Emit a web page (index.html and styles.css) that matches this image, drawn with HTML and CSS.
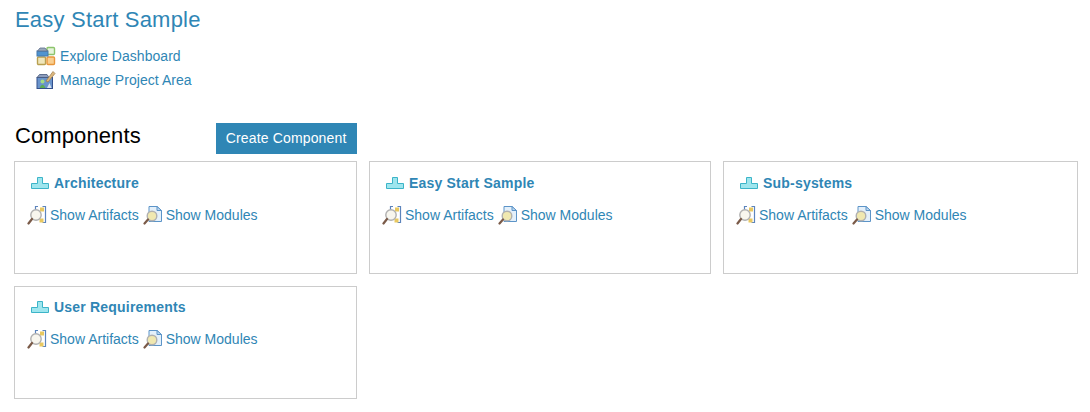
FILE: index.html
```html
<!DOCTYPE html>
<html lang="en">
<head>
    <meta charset="UTF-8">
    <title>Easy Start Sample</title>
    <link rel="stylesheet" href="styles.css">
</head>
<body>
    <svg class="defs" width="0" height="0">
        <symbol id="i-dash" viewBox="0 0 20 20">
            <rect x="11" y="1.5" width="7.5" height="7" rx="1" fill="#e6f4dc" stroke="#8cc46c" stroke-width="1.4"/>
            <rect x="1.5" y="11" width="8" height="7.5" rx="1" fill="#efe6bc" stroke="#b8a050" stroke-width="1.4"/>
            <rect x="11" y="11" width="7.5" height="7.5" rx="1" fill="#f9cf90" stroke="#e8963c" stroke-width="1.4"/>
            <rect x="1" y="5" width="11" height="5" fill="#4f94d0" stroke="#4478ac"/>
            <path d="M1.5 5 L4 2 H9 L11.5 5 Z" fill="#9aa8bc" stroke="#5c6c8c" stroke-width=".8"/>
        </symbol>
        <symbol id="i-manage" viewBox="0 0 20 20">
            <rect x="1" y="7.5" width="15.5" height="11" fill="#6a94cc" stroke="#34508c"/>
            <path d="M1 7.5 L3.5 4.5 H11 L13 7.5 Z" fill="#8c9cbc" stroke="#44587c" stroke-width=".8"/>
            <circle cx="6.5" cy="11.5" r="2" fill="#a4dc84"/>
            <path d="M3.5 18 Q6.5 11.5 9.5 18 Z" fill="#5cac54"/>
            <path d="M11 18 L13.5 13 L15.5 18 Z" fill="#d8e4f0"/>
            <path d="M10 11 L17 1.5 L19 3.5 L12 12 Z" fill="#dcb880" stroke="#9c7844" stroke-width=".7"/>
        </symbol>
        <symbol id="i-component" viewBox="0 0 18 12">
            <path d="M6.5 .5 H11.5 V6.5 H17.5 V11.5 H.5 V6.5 H6.5 Z" fill="#9ee6ee" stroke="#3cb4c8"/>
        </symbol>
        <symbol id="i-artifacts" viewBox="0 0 20 20">
            <path d="M11 1.5 H8.5 V5 M15.5 1.5 H18.5 V17.5 H15.5" fill="none" stroke="#5c84bc" stroke-width="1.2"/>
            <rect x="13" y="2.5" width="4" height="4" fill="#e8c860"/>
            <rect x="12.5" y="13.5" width="4" height="4" fill="#e8c860"/>
            <circle cx="9" cy="10" r="5.2" fill="#f8f6ee" stroke="#b0b0b0" stroke-width="1.4"/>
            <path d="M5 14 L1.5 18.5" stroke="#7a5a48" stroke-width="2.2" stroke-linecap="round"/>
        </symbol>
        <symbol id="i-modules" viewBox="0 0 20 20">
            <path d="M6 1.5 H14 L18.5 5.5 V16.5 H6 Z" fill="#e4f0fa" stroke="#5c94c8"/>
            <path d="M14 1.5 V5.5 H18.5 Z" fill="#bcd8f0" stroke="#5c94c8"/>
            <circle cx="9" cy="11" r="4.8" fill="#f0e8b0" stroke="#b0b0b0" stroke-width="1.4"/>
            <path d="M5 14.5 L1.5 18.5" stroke="#7a5a48" stroke-width="2.2" stroke-linecap="round"/>
        </symbol>
    </svg>

    <h1 class="page-title"><a href="#">Easy Start Sample</a></h1>
    <ul class="project-links">
        <li><svg class="icon-md"><use href="#i-dash"/></svg><a href="#">Explore Dashboard</a></li>
        <li><svg class="icon-md"><use href="#i-manage"/></svg><a href="#">Manage Project Area</a></li>
    </ul>

    <div class="section-head">
        <h2>Components</h2>
        <a class="btn" href="#">Create Component</a>
    </div>

    <div class="cards">
        <div class="card">
            <div class="card-title"><svg class="icon-comp"><use href="#i-component"/></svg><a href="#">Architecture</a></div>
            <div class="card-links">
                <svg class="icon-md"><use href="#i-artifacts"/></svg><a href="#">Show Artifacts</a>
                <svg class="icon-md"><use href="#i-modules"/></svg><a href="#">Show Modules</a>
            </div>
        </div>
        <div class="card">
            <div class="card-title"><svg class="icon-comp"><use href="#i-component"/></svg><a href="#">Easy Start Sample</a></div>
            <div class="card-links">
                <svg class="icon-md"><use href="#i-artifacts"/></svg><a href="#">Show Artifacts</a>
                <svg class="icon-md"><use href="#i-modules"/></svg><a href="#">Show Modules</a>
            </div>
        </div>
        <div class="card">
            <div class="card-title"><svg class="icon-comp"><use href="#i-component"/></svg><a href="#">Sub-systems</a></div>
            <div class="card-links">
                <svg class="icon-md"><use href="#i-artifacts"/></svg><a href="#">Show Artifacts</a>
                <svg class="icon-md"><use href="#i-modules"/></svg><a href="#">Show Modules</a>
            </div>
        </div>
        <div class="card">
            <div class="card-title"><svg class="icon-comp"><use href="#i-component"/></svg><a href="#">User Requirements</a></div>
            <div class="card-links">
                <svg class="icon-md"><use href="#i-artifacts"/></svg><a href="#">Show Artifacts</a>
                <svg class="icon-md"><use href="#i-modules"/></svg><a href="#">Show Modules</a>
            </div>
        </div>
    </div>
</body>
</html>
```
FILE: styles.css
```css
html, body {
    margin: 0;
    padding: 0;
    font-family: "Liberation Sans", Arial, sans-serif;
    font-size: 14px;
    color: black;
    background-color: white;
}
body {
    padding: 8px 12px 0 14px;
    overflow: hidden;
}
a {
    color: #2f86b5;
    text-decoration: none;
}
.defs {
    position: absolute;
}

/* Kopf */
.page-title {
    margin: 0 0 0 1px;
    font-size: 22px;
    font-weight: 400;
    line-height: 24px;
    letter-spacing: .2px;
}
.project-links {
    list-style: none;
    margin: 12px 0 0 22px;
    padding: 0;
    letter-spacing: .05px;
}
.project-links li {
    display: flex;
    align-items: center;
    gap: 4px;
    height: 24px;
}
.icon-md {
    width: 20px;
    height: 20px;
    flex: none;
}

/* Components */
.section-head {
    display: flex;
    align-items: flex-end;
    margin-top: 31px;
    height: 31px;
}
.section-head h2 {
    margin: 0 75px 0 1px;
    font-size: 22px;
    font-weight: 400;
    line-height: 28px;
    padding-bottom: 4px;
    letter-spacing: .1px;
}
.btn {
    background-color: #2f86b5;
    color: white;
    padding: 0 11px 0 10px;
    line-height: 31px;
    letter-spacing: .15px;
}
.cards {
    display: grid;
    grid-template-columns: 343px 342px 355px;
    grid-auto-rows: 113px;
    gap: 11.6px 12px;
    margin-top: 7px;
}
.card {
    border: 1px solid #ccc;
    box-sizing: border-box;
    padding: 10.8px 12px 0;
}
.card-title {
    display: flex;
    align-items: center;
    gap: 5px;
    height: 20px;
    padding-left: 4px;
    font-weight: 700;
    letter-spacing: .2px;
}
.icon-comp {
    width: 18px;
    height: 12px;
    flex: none;
}
.card-links {
    display: flex;
    align-items: center;
    margin-top: 12px;
    height: 20px;
}
.card-links a {
    margin: 0 4px 0 3px;
}
```
